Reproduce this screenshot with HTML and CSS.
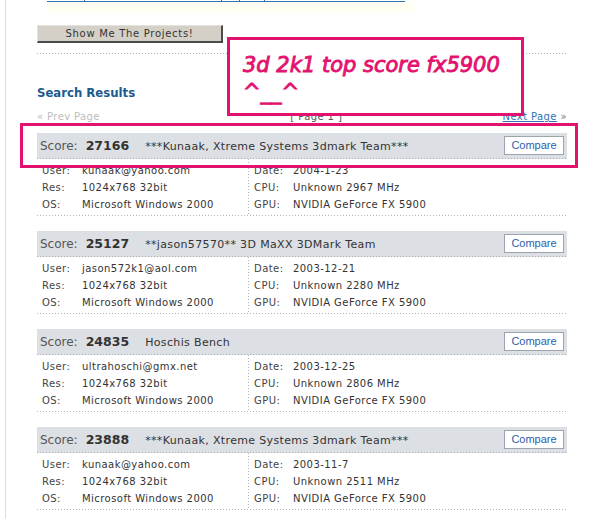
FILE: index.html
```html
<!DOCTYPE html>
<html>
<head>
<meta charset="utf-8">
<link rel="stylesheet" href="styles.css">
</head>
<body>
<div class="page">
  <div class="top-rule"><span class="c1"></span><span class="c2"></span><span class="c3"></span><span class="c4"></span><span class="c5"></span></div>
  <div class="band"></div>
  <button class="projects-btn">Show Me The Projects!</button>
  <div class="dots"></div>
  <h2 class="section-title">Search Results</h2>
  <div class="pager">
    <span class="prev">&laquo; Prev Page</span>
    <span class="current">[ Page 1 ]</span>
    <span class="next-wrap"><a class="next" href="#">Next Page</a> &raquo;</span>
  </div>

  <div class="card">
    <div class="card-head">
      <div class="score-line"><span class="score-label">Score:</span><span class="score-value">27166</span><span class="score-name">***Kunaak, Xtreme Systems 3dmark Team***</span></div>
      <button class="compare">Compare</button>
    </div>
    <div class="details">
      <div class="col col-left">
        <div class="row"><span class="label">User:</span><span class="value">kunaak@yahoo.com</span></div>
        <div class="row"><span class="label">Res:</span><span class="value">1024x768 32bit</span></div>
        <div class="row"><span class="label">OS:</span><span class="value">Microsoft Windows 2000</span></div>
      </div>
      <div class="col col-right">
        <div class="row"><span class="label">Date:</span><span class="value">2004-1-23</span></div>
        <div class="row"><span class="label">CPU:</span><span class="value">Unknown 2967 MHz</span></div>
        <div class="row"><span class="label">GPU:</span><span class="value">NVIDIA GeForce FX 5900</span></div>
      </div>
    </div>
  </div>

  <div class="card">
    <div class="card-head">
      <div class="score-line"><span class="score-label">Score:</span><span class="score-value">25127</span><span class="score-name">**jason57570** 3D MaXX 3DMark Team</span></div>
      <button class="compare">Compare</button>
    </div>
    <div class="details">
      <div class="col col-left">
        <div class="row"><span class="label">User:</span><span class="value">jason572k1@aol.com</span></div>
        <div class="row"><span class="label">Res:</span><span class="value">1024x768 32bit</span></div>
        <div class="row"><span class="label">OS:</span><span class="value">Microsoft Windows 2000</span></div>
      </div>
      <div class="col col-right">
        <div class="row"><span class="label">Date:</span><span class="value">2003-12-21</span></div>
        <div class="row"><span class="label">CPU:</span><span class="value">Unknown 2280 MHz</span></div>
        <div class="row"><span class="label">GPU:</span><span class="value">NVIDIA GeForce FX 5900</span></div>
      </div>
    </div>
  </div>

  <div class="card">
    <div class="card-head">
      <div class="score-line"><span class="score-label">Score:</span><span class="score-value">24835</span><span class="score-name">Hoschis Bench</span></div>
      <button class="compare">Compare</button>
    </div>
    <div class="details">
      <div class="col col-left">
        <div class="row"><span class="label">User:</span><span class="value">ultrahoschi@gmx.net</span></div>
        <div class="row"><span class="label">Res:</span><span class="value">1024x768 32bit</span></div>
        <div class="row"><span class="label">OS:</span><span class="value">Microsoft Windows 2000</span></div>
      </div>
      <div class="col col-right">
        <div class="row"><span class="label">Date:</span><span class="value">2003-12-25</span></div>
        <div class="row"><span class="label">CPU:</span><span class="value">Unknown 2806 MHz</span></div>
        <div class="row"><span class="label">GPU:</span><span class="value">NVIDIA GeForce FX 5900</span></div>
      </div>
    </div>
  </div>

  <div class="card">
    <div class="card-head">
      <div class="score-line"><span class="score-label">Score:</span><span class="score-value">23888</span><span class="score-name">***Kunaak, Xtreme Systems 3dmark Team***</span></div>
      <button class="compare">Compare</button>
    </div>
    <div class="details">
      <div class="col col-left">
        <div class="row"><span class="label">User:</span><span class="value">kunaak@yahoo.com</span></div>
        <div class="row"><span class="label">Res:</span><span class="value">1024x768 32bit</span></div>
        <div class="row"><span class="label">OS:</span><span class="value">Microsoft Windows 2000</span></div>
      </div>
      <div class="col col-right">
        <div class="row"><span class="label">Date:</span><span class="value">2003-11-7</span></div>
        <div class="row"><span class="label">CPU:</span><span class="value">Unknown 2511 MHz</span></div>
        <div class="row"><span class="label">GPU:</span><span class="value">NVIDIA GeForce FX 5900</span></div>
      </div>
    </div>
  </div>

  <div class="note note-title">3d 2k1 top score fx5900<br>^__^</div>
  <div class="note note-highlight"></div>
</div>
</body>
</html>
```

FILE: styles.css
```css
html, body {
  margin: 0;
  padding: 0;
  background: #fff;
}

body {
  font-family: "DejaVu Sans", Verdana, sans-serif;
  font-size: 10px;
  color: #333;
  overflow: hidden;
}

.page {
  position: relative;
  margin-left: 5px;
  border-left: 1px solid #dcdcdc;
  padding-left: 31px;
  width: 530px;
  min-height: 519px;
}

/* remnant of the table above */
.top-rule {
  display: flex;
  margin-left: 10px;
  width: 358px;
  height: 1px;
  border-bottom: 1px solid #2f72b3;
}
.top-rule span {
  height: 1px;
  border-right: 1px solid #2f72b3;
}
.top-rule .c1 { width: 37px; }
.top-rule .c2 { width: 136px; }
.top-rule .c3 { width: 17px; }
.top-rule .c4 { width: 24px; }
.top-rule .c5 { flex: 1; border-right: 0; }

.band {
  margin-left: 10px;
  width: 366px;
  height: 10px;
  background: #fffff2;
}

.projects-btn {
  display: block;
  margin: 13px 0 0;
  width: 186px;
  height: 18px;
  padding: 1px 0 0;
  box-sizing: border-box;
  background: #d4d0c8;
  border-top: 1px solid #e4e2dc;
  border-left: 1px solid #e4e2dc;
  border-right: 2px solid #4a4a4a;
  border-bottom: 2px solid #4a4a4a;
  font-family: "DejaVu Sans", Verdana, sans-serif;
  font-size: 10px;
  letter-spacing: 0.7px;
  color: #333;
  line-height: 14px;
}

.dots {
  margin-top: 10px;
  width: 529px;
  height: 1px;
  background: repeating-linear-gradient(to right, #b0b0b0 0 1px, transparent 1px 3px);
}

.section-title {
  margin: 31px 0 0;
  font-family: "DejaVu Sans Condensed", "DejaVu Sans", sans-serif;
  font-stretch: condensed;
  font-weight: bold;
  font-size: 13px;
  line-height: 16px;
  color: #1b5b8f;
}

.pager {
  margin-top: 9px;
  display: flex;
  justify-content: space-between;
  line-height: 14px;
  height: 14px;
  letter-spacing: 0.4px;
}
.pager .prev { color: #bdbdbd; }
.pager .current { color: #555; padding-left: 30px; }
.pager .next-wrap { color: #777; }
.pager .next { color: #2f72b3; text-decoration: underline; }

.card {
  margin-top: 9px;
  width: 530px;
}
.card + .card {
  margin-top: 15px;
}

.card-head {
  height: 26px;
  box-sizing: border-box;
  padding: 0 3px 1px 3px;
  display: flex;
  align-items: center;
  justify-content: space-between;
  background:
    repeating-linear-gradient(to right, #a9adb2 0 1px, transparent 1px 3px) left bottom / 100% 1px no-repeat,
    #dcdfe3;
}

.score-label {
  font-size: 12px;
  color: #555;
}
.score-value {
  font-size: 12.5px;
  font-weight: bold;
  color: #333;
  margin-left: 8px;
}
.score-name {
  font-size: 11px;
  letter-spacing: 0.35px;
  color: #333;
  margin-left: 16px;
}

.compare {
  width: 60px;
  height: 19px;
  padding: 0;
  box-sizing: border-box;
  background: #fff;
  border: 1px solid #9ca5ae;
  font-family: "Liberation Sans", Arial, sans-serif;
  font-size: 11px;
  color: #2c5ea8;
  line-height: 15px;
}

.details {
  display: grid;
  grid-template-columns: 211px 1fr;
  padding-bottom: 1px;
  background: repeating-linear-gradient(to right, #b4b4b4 0 1px, transparent 1px 3px) left bottom / 100% 1px no-repeat;
}

.col {
  padding: 3px 0 2px;
}
.col-left {
  padding-left: 5px;
}
.col-right {
  padding-left: 6px;
  background: repeating-linear-gradient(to bottom, #b4b4b4 0 1px, transparent 1px 3px) left top / 1px 100% no-repeat;
}

.row {
  display: flex;
  line-height: 17px;
  letter-spacing: 0.45px;
  white-space: nowrap;
}
.label {
  width: 40px;
  flex: none;
  color: #444;
}
.col-right .label {
  width: 39px;
}
.value {
  color: #333;
}

/* pink annotations drawn over the screenshot */
.note {
  position: absolute;
  box-sizing: border-box;
  border: 3px solid #e4126f;
}
.note-title {
  left: 221px;
  top: 37px;
  width: 297px;
  height: 79px;
  background: #fff;
  padding: 12px 0 0 13px;
  font-family: "DejaVu Sans", sans-serif;
  font-style: italic;
  font-size: 21px;
  line-height: 27px;
  color: #e4126f;
  -webkit-text-stroke: 0.9px #e4126f;
  white-space: nowrap;
}
.note-highlight {
  left: 14px;
  top: 123px;
  width: 558px;
  height: 45px;
}
```
